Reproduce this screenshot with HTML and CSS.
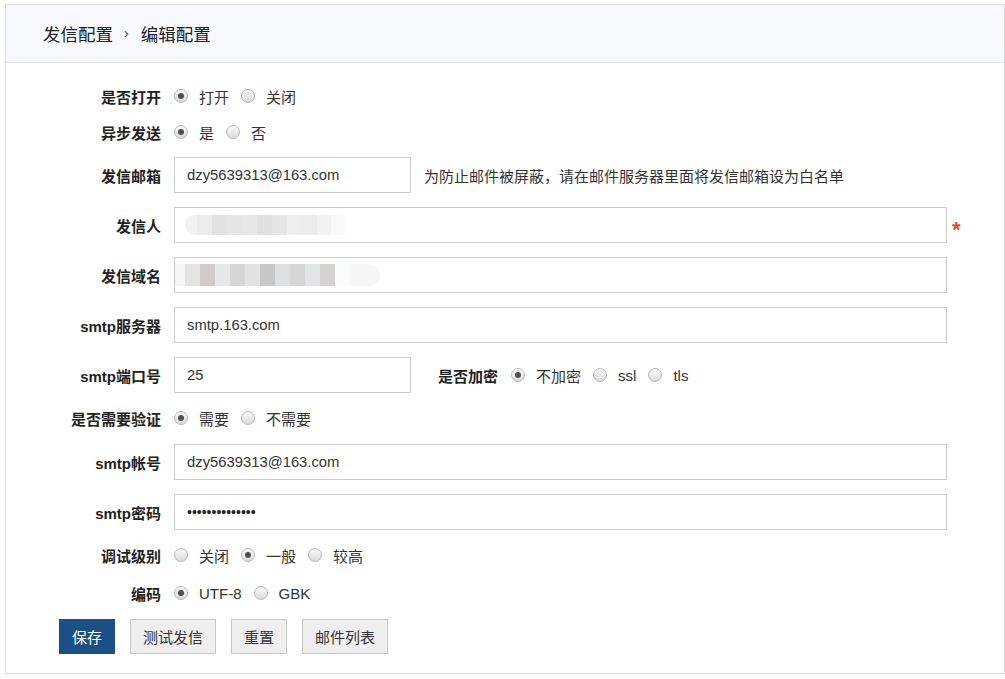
FILE: index.html
```html
<!DOCTYPE html>
<html lang="zh">
<head>
<meta charset="utf-8">
<title>编辑配置</title>
<link rel="stylesheet" href="styles.css">
</head>
<body>
<div class="panel">
  <div class="panel-head">
    <span>发信配置</span><span class="sep">›</span><span>编辑配置</span>
  </div>
  <form class="form">
    <div class="row radio-row">
      <label class="lbl">是否打开</label>
      <div class="ctrl">
        <span class="radio checked"></span><span class="opt">打开</span>
        <span class="radio"></span><span class="opt">关闭</span>
      </div>
    </div>
    <div class="row radio-row">
      <label class="lbl">异步发送</label>
      <div class="ctrl">
        <span class="radio checked"></span><span class="opt">是</span>
        <span class="radio"></span><span class="opt">否</span>
      </div>
    </div>
    <div class="row">
      <label class="lbl">发信邮箱</label>
      <div class="ctrl">
        <input class="inp short" type="text" value="dzy5639313@163.com">
        <span class="hint">为防止邮件被屏蔽，请在邮件服务器里面将发信邮箱设为白名单</span>
      </div>
    </div>
    <div class="row">
      <label class="lbl">发信人</label>
      <div class="ctrl">
        <div class="inp wide fake"><span class="blur blur-a"></span></div>
        <span class="req">*</span>
      </div>
    </div>
    <div class="row">
      <label class="lbl">发信域名</label>
      <div class="ctrl">
        <div class="inp wide fake"><span class="blur blur-b"></span></div>
      </div>
    </div>
    <div class="row">
      <label class="lbl">smtp服务器</label>
      <div class="ctrl">
        <input class="inp wide" type="text" value="smtp.163.com">
      </div>
    </div>
    <div class="row">
      <label class="lbl">smtp端口号</label>
      <div class="ctrl">
        <input class="inp short" type="text" value="25">
        <label class="lbl inline-lbl">是否加密</label>
        <span class="radio checked"></span><span class="opt">不加密</span>
        <span class="radio"></span><span class="opt">ssl</span>
        <span class="radio"></span><span class="opt">tls</span>
      </div>
    </div>
    <div class="row radio-row">
      <label class="lbl">是否需要验证</label>
      <div class="ctrl">
        <span class="radio checked"></span><span class="opt">需要</span>
        <span class="radio"></span><span class="opt">不需要</span>
      </div>
    </div>
    <div class="row after-radio">
      <label class="lbl">smtp帐号</label>
      <div class="ctrl">
        <input class="inp wide" type="text" value="dzy5639313@163.com">
      </div>
    </div>
    <div class="row">
      <label class="lbl">smtp密码</label>
      <div class="ctrl">
        <div class="inp wide fake pwd">••••••••••••••</div>
      </div>
    </div>
    <div class="row radio-row">
      <label class="lbl">调试级别</label>
      <div class="ctrl">
        <span class="radio"></span><span class="opt">关闭</span>
        <span class="radio checked"></span><span class="opt">一般</span>
        <span class="radio"></span><span class="opt">较高</span>
      </div>
    </div>
    <div class="row radio-row encode-row">
      <label class="lbl">编码</label>
      <div class="ctrl">
        <span class="radio checked"></span><span class="opt">UTF-8</span>
        <span class="radio"></span><span class="opt">GBK</span>
      </div>
    </div>
    <div class="actions">
      <button type="button" class="btn primary">保存</button>
      <button type="button" class="btn">测试发信</button>
      <button type="button" class="btn">重置</button>
      <button type="button" class="btn">邮件列表</button>
    </div>
  </form>
</div>
</body>
</html>
```
FILE: styles.css
```css
* { box-sizing: border-box; }
body {
  margin: 0;
  background: #fff;
  font-family: "Liberation Sans", "Noto Sans CJK SC", sans-serif;
  font-size: 15px;
  color: #333;
}
.panel {
  margin: 4px 0 0 5px;
  width: 1000px;
  height: 670px;
  border: 1px solid #dcdcdc;
}
.panel-head {
  height: 58px;
  background: #f7f9fc;
  border-bottom: 1px solid #e1e4e8;
  padding-left: 37px;
  display: flex;
  align-items: center;
  font-size: 17.5px;
  color: #222;
  padding-bottom: 1px;
}
.panel-head .sep {
  margin: 0 12px 0 11px;
  font-size: 14px;
  color: #444;
}
.form {
  padding: 22px 0 0 53px;
  display: flex;
  flex-direction: column;
  gap: 14px;
}
.row {
  display: flex;
  align-items: center;
  min-height: 36px;
}
.radio-row { min-height: 22px; }
.after-radio { margin-top: 1px; }
.encode-row { margin-top: 2px; }
.lbl {
  width: 102px;
  flex: none;
  text-align: right;
  font-weight: bold;
  font-size: 15px;
  color: #222;
  margin-right: 13px;
}
.ctrl {
  display: flex;
  align-items: center;
}
.inp {
  height: 36px;
  border: 1px solid #ccc;
  padding: 0 12px;
  font-family: "Liberation Sans", "Noto Sans CJK SC", sans-serif;
  font-size: 14.8px;
  color: #333;
  background: #fff;
  outline: none;
}
.short { width: 237px; }
.wide { width: 773px; }
.fake {
  display: flex;
  align-items: center;
}
.pwd {
  font-size: 14px;
  color: #222;
}
.hint {
  margin-left: 13px;
  color: #333;
}
.req {
  margin-left: 5px;
  color: #e04a3a;
  font-size: 22px;
  font-weight: bold;
  line-height: 1;
  padding-top: 9px;
}
.inline-lbl {
  width: auto;
  margin-left: 27px;
  margin-right: 13px;
}
.radio {
  width: 14px;
  height: 14px;
  border-radius: 50%;
  border: 1px solid #b8b8b8;
  background: linear-gradient(#fbfbfb, #dadada);
  flex: none;
  position: relative;
}
.radio.checked::after {
  content: "";
  position: absolute;
  left: 3px;
  top: 3px;
  width: 6px;
  height: 6px;
  border-radius: 50%;
  background: #505050;
}
.opt {
  margin-left: 11px;
  margin-right: 12px;
  color: #333;
}
.blur {
  display: block;
  height: 20px;
  filter: blur(0.6px);
}
.blur-a {
  width: 160px;
  margin-left: -2px;
  border-radius: 10px 0 0 10px;
  background: linear-gradient(90deg,
    #f2f2f2 0 12px, #ececec 12px 27px, #e2e2e2 27px 42px, #e6e6e6 42px 57px,
    #e8e8e8 57px 72px, #e0e0e0 72px 87px, #e6e6e6 87px 102px, #eeeeee 102px 117px,
    #ececec 117px 132px, #f2f2f2 132px 146px, #fafafa 146px 160px);
}
.blur-b {
  width: 205px;
  height: 22px;
  margin-left: -12px;
  border-radius: 0 12px 12px 0;
  background: linear-gradient(90deg,
    #f6f6f6 0 10px, #e4e4e4 10px 25px, #cfcccb 25px 40px, #e6e8ea 40px 55px,
    #d6d6d6 55px 70px, #e2e2e2 70px 85px, #c9c8c8 85px 100px, #dddfe0 100px 115px,
    #d6d6d4 115px 130px, #e2e5e6 130px 145px, #d4d3d2 145px 160px, #fafcfb 160px 175px,
    #f7f7f7 175px 205px);
}
.actions {
  display: flex;
  gap: 15px;
  margin-top: 1px;
}
.btn {
  height: 35px;
  padding: 0 12px;
  border: 1px solid #c6c6c6;
  background: #efefef;
  font-family: "Liberation Sans", "Noto Sans CJK SC", sans-serif;
  font-size: 15px;
  color: #333;
}
.btn.primary {
  background: #1b4f86;
  border-color: #1b4f86;
  color: #fff;
}
```
